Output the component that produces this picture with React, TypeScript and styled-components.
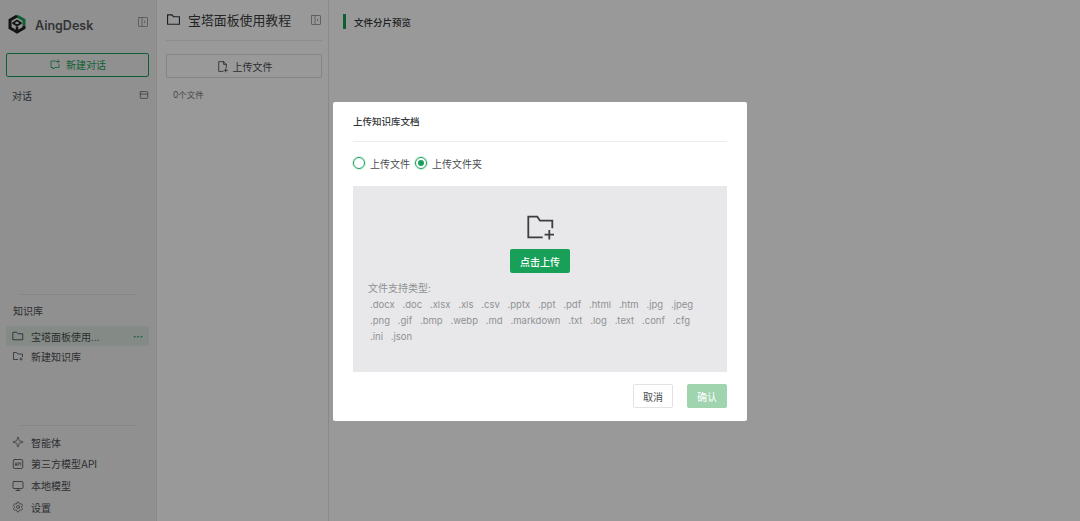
import React from "react";
import styled, { createGlobalStyle } from "styled-components";
import { Settings, Sparkle, Monitor } from "lucide-react";

const GlobalStyle = createGlobalStyle`
  html, body {
    margin: 0;
    padding: 0;
    height: 100%;
    overflow: hidden;
    font-family: "Inter", "Liberation Sans", "Noto Sans CJK SC", sans-serif;
  }
  #root { height: 100%; }
`;

const Page = styled.div`
  position: relative;
  display: flex;
  width: 1080px;
  height: 521px;
  background: #ffffff;
  color: #333639;
  overflow: hidden;
`;

const Sidebar = styled.aside`
  display: flex;
  flex-direction: column;
  flex: 0 0 157px;
  box-sizing: border-box;
  height: 100%;
  padding: 0 7px;
  background: #f0f0f0;
  border-right: 1px solid #e4e4e4;
`;

const BrandRow = styled.div`
  display: flex;
  align-items: center;
  height: 48px;
  margin-bottom: 5px;
`;

const BrandName = styled.span`
  margin: 2px 0 0 8px;
  flex: 1;
  font-size: 12.5px;
  font-weight: 600;
  color: #55585b;
`;

const CollapseBtn = styled.span<{ $lift?: number }>`
  display: inline-flex;
  margin-bottom: ${(p) => p.$lift ?? 0}px;
  color: #8a8d90;
`;

const NewChatButton = styled.div`
  display: flex;
  align-items: center;
  justify-content: center;
  gap: 5px;
  box-sizing: border-box;
  height: 24px;
  margin-left: -1px;
  padding-bottom: 1px;
  border: 1px solid #18a058;
  border-radius: 2px;
  font-size: 10px;
  color: #18a058;
`;

const SectionHead = styled.div`
  display: flex;
  align-items: center;
  justify-content: space-between;
  height: 14px;
  margin-top: 11px;
  padding: 0 0 0 5px;
  font-size: 10px;
  color: #4a4d50;
`;

const Spacer = styled.div<{ $h?: number }>`
  flex: ${(p) => (p.$h ? `0 0 ${p.$h}px` : "1")};
`;

const Divider = styled.div`
  height: 1px;
  margin: 0 12px 0 14px;
  background: #dcdcdc;
`;

const KnowledgeLabel = styled.div`
  height: 14px;
  margin: 9px 0 8px;
  padding-left: 6px;
  font-size: 10px;
  line-height: 14px;
  color: #4a4d50;
`;

const KnowledgeItem = styled.div<{ $active?: boolean }>`
  display: flex;
  align-items: center;
  gap: 7px;
  height: 20px;
  margin-left: -1px;
  padding: 0 6px;
  border-radius: 2px;
  font-size: 10px;
  color: #4a4d50;
  background: ${(p) => (p.$active ? "#dce8df" : "transparent")};
`;

const ToolList = styled.div`
  display: grid;
  grid-auto-rows: 21.67px;
  margin-top: 5px;
`;

const NavItem = styled.div`
  display: flex;
  align-items: center;
  gap: 7px;
  padding: 0 6px 0 5px;
  font-size: 10px;
  color: #4a4d50;
`;

const NavLabel = styled.span`
  flex: 1;
  white-space: nowrap;
`;

const Dots = styled.span`
  color: #18a058;
  font-size: 10px;
  font-weight: 700;
  line-height: 1;
`;

const FileColumn = styled.section`
  display: flex;
  flex-direction: column;
  flex: 0 0 172px;
  box-sizing: border-box;
  height: 100%;
  padding: 0 6px 0 9px;
  background: #ffffff;
  border-right: 1px solid #e4e4e4;
`;

const FileHead = styled.div`
  display: flex;
  align-items: center;
  height: 41px;
  padding-bottom: 1px;
  box-sizing: border-box;
  border-bottom: 1px solid #ececec;
`;

const FileTitle = styled.h1`
  flex: 1;
  margin: 0 0 0 7px;
  font-size: 12.9px;
  font-weight: 400;
  color: #3a3d40;
`;

const UploadButton = styled.div`
  display: flex;
  align-items: center;
  justify-content: center;
  gap: 4px;
  box-sizing: border-box;
  height: 24px;
  margin-top: 13px;
  border: 1px solid #dedede;
  border-radius: 2px;
  font-size: 10px;
  color: #4a4d50;
`;

const FileCount = styled.div`
  margin-top: 10px;
  padding-left: 7px;
  font-size: 8.5px;
  line-height: 14px;
  color: #76797c;
`;

const Preview = styled.main`
  flex: 1;
  padding: 14px 14px;
`;

const PreviewTitle = styled.div`
  display: flex;
  align-items: center;
  height: 15px;
  padding-left: 8px;
  border-left: 3px solid #18a058;
  font-size: 9.5px;
  font-weight: 500;
  color: #333639;
`;

const Overlay = styled.div`
  position: absolute;
  inset: 0;
  display: flex;
  align-items: center;
  justify-content: center;
  padding-top: 2px;
  background: rgba(0, 0, 0, 0.4);
`;

const Modal = styled.div`
  display: flex;
  flex-direction: column;
  box-sizing: border-box;
  width: 414px;
  height: 319px;
  padding: 0 20px;
  background: #ffffff;
  border-radius: 2px;
`;

const ModalHead = styled.div`
  display: flex;
  align-items: center;
  box-sizing: border-box;
  height: 40px;
  padding-bottom: 2px;
  border-bottom: 1px solid #ececec;
  font-size: 9.5px;
  font-weight: 500;
  color: #333639;
`;

const RadioRow = styled.div`
  display: flex;
  align-items: center;
  gap: 5px;
  height: 14px;
  margin-top: 14px;
  font-size: 10px;
  color: #4a4d50;
`;

const RadioOption = styled.label`
  display: flex;
  align-items: center;
  gap: 5px;
`;

const RadioDot = styled.span<{ $checked?: boolean }>`
  display: inline-flex;
  align-items: center;
  justify-content: center;
  box-sizing: border-box;
  width: 12px;
  height: 12px;
  border: 1px solid #18a058;
  border-radius: 50%;
  box-shadow: 0 0 0 1px rgba(24, 160, 88, 0.18);
  &::after {
    content: "";
    display: ${(p) => (p.$checked ? "block" : "none")};
    width: 6px;
    height: 6px;
    border-radius: 50%;
    background: #18a058;
  }
`;

const DropZone = styled.div`
  display: flex;
  flex-direction: column;
  box-sizing: border-box;
  height: 186px;
  margin-top: 16px;
  padding: 29px 15px 0;
  background: #e8e8ea;
`;

const DropIcon = styled.div`
  display: flex;
  justify-content: center;
  padding-left: 1px;
  color: #3c3e41;
`;

const PickButton = styled.div`
  align-self: center;
  display: flex;
  align-items: center;
  justify-content: center;
  width: 60px;
  height: 24px;
  margin-top: 8px;
  border-radius: 2px;
  background: #18a058;
  color: #ffffff;
  font-size: 10px;
  font-weight: 500;
`;

const TypesLabel = styled.div`
  margin-top: 7px;
  font-size: 10px;
  line-height: 16px;
  color: #8f9194;
`;

const TypesList = styled.div`
  margin-top: 1px;
  padding-left: 2px;
`;

const TypesRow = styled.div`
  display: flex;
  column-gap: 7.8px;
  font-size: 9.5px;
  line-height: 16px;
  color: #8f9194;
`;

const ModalFoot = styled.div`
  display: flex;
  justify-content: flex-end;
  gap: 14px;
  margin-top: 12px;
`;

const FootButton = styled.div<{ $primary?: boolean }>`
  display: flex;
  align-items: center;
  justify-content: center;
  box-sizing: border-box;
  width: 40px;
  height: 24px;
  border-radius: 2px;
  border: 1px solid ${(p) => (p.$primary ? "#9fd4af" : "#e2e2e2")};
  background: ${(p) => (p.$primary ? "#9fd4af" : "#ffffff")};
  color: ${(p) => (p.$primary ? "#ffffff" : "#4a4d50")};
  font-size: 10px;
`;

const Icon: React.FC<{ size?: number; sw?: number; children: React.ReactNode }> = ({ size = 12, sw = 1.6, children }) => (
  <svg width={size} height={size} viewBox="0 0 24 24" fill="none" stroke="currentColor" strokeWidth={sw} strokeLinecap="round" strokeLinejoin="round" style={{ flexShrink: 0 }}>
    {children}
  </svg>
);

const Collapse = ({ lift }: { lift?: number }) => (
  <CollapseBtn $lift={lift}>
    <Icon size={12}>
      <rect x="3" y="3" width="18" height="18" rx="1" />
      <path d="M10 3v18" />
      <path d="M16 10l-2 2 2 2" />
    </Icon>
  </CollapseBtn>
);

const Folder = ({ size = 12 }: { size?: number }) => (
  <Icon size={size} sw={1.8}>
    <path d="M2.500 4.500h7l2.500 3h9.500v12h-19z" strokeLinejoin="miter" />
  </Icon>
);

const FolderPlus = () => (
  <Icon size={12}>
    <path d="M12 19H3V5h6l2.500 3H21v6" strokeLinecap="butt" />
    <path d="M18 15v6M15 18h6" strokeLinecap="butt" />
  </Icon>
);

const BigFolderPlus = () => (
  <svg width="28" height="26" viewBox="0 0 28 26" fill="none" stroke="currentColor" strokeWidth="1.8">
    <path d="M15.700 22.300H1.300V1.700h9l2.700 4h12.300v7.600" />
    <path d="M22.300 15v9.400M17.600 19.700H27" />
  </svg>
);

const Logo = () => (
  <svg width="20" height="20" viewBox="0 0 20 20" fill="none" style={{ flexShrink: 0 }}>
    <path d="M10 2l7 4v5" stroke="#18a058" strokeWidth="3" strokeLinejoin="miter" />
    <path d="M10 2L3 6v8l4 2.300" stroke="#1d1f22" strokeWidth="3" />
    <path d="M17 11.500V14l-7 4-3-1.700" stroke="#1d1f22" strokeWidth="3" />
    <path d="M10 5.500l4.800 3v1.300L10 12.500 5.200 9.800V8.500z" fill="#1d1f22" />
    <path d="M10 7.500l2.400 1.400L10 10.200 7.600 8.900z" fill="#f0f0f0" />
    <path d="M10 12.500v4" stroke="#1d1f22" strokeWidth="2.500" />
  </svg>
);

const typeRows = [
  [".docx", ".doc", ".xlsx", ".xls", ".csv", ".pptx", ".ppt", ".pdf", ".html", ".htm", ".jpg", ".jpeg"],
  [".png", ".gif", ".bmp", ".webp", ".md", ".markdown", ".txt", ".log", ".text", ".conf", ".cfg"],
  [".ini", ".json"],
];

export default function App() {
  return (
    <Page>
      <GlobalStyle />
      <Sidebar>
        <BrandRow>
          <Logo />
          <BrandName>AingDesk</BrandName>
          <Collapse lift={4} />
        </BrandRow>
        <NewChatButton>
          <Icon size={12}>
            <path d="M13 4H4v13h4v3l4-3h8v-6" strokeLinejoin="miter" />
            <path d="M18 2v6M15 5h6" />
          </Icon>
          新建对话
        </NewChatButton>
        <SectionHead>
          对话
          <Icon size={10}>
            <rect x="3" y="4" width="18" height="16" rx="2" />
            <path d="M3 10h18" />
          </Icon>
        </SectionHead>
        <Spacer />
        <Divider />
        <KnowledgeLabel>知识库</KnowledgeLabel>
        <KnowledgeItem $active>
          <Folder />
          <NavLabel>宝塔面板使用...</NavLabel>
          <Dots>···</Dots>
        </KnowledgeItem>
        <KnowledgeItem>
          <FolderPlus />
          <NavLabel>新建知识库</NavLabel>
        </KnowledgeItem>
        <Spacer $h={59} />
        <Divider />
        <ToolList>
          <NavItem>
            <Sparkle size={12} strokeWidth={1.4} />
            <NavLabel>智能体</NavLabel>
          </NavItem>
          <NavItem>
            <Icon>
              <rect x="2.500" y="3" width="19" height="18" rx="3" />
              <path d="M6.500 15l1.500-6 1.500 6M7 13.200h2M12 15V9h1.500a1.600 1.600 0 0 1 0 3.400H12M17.500 9v6" strokeWidth="1.200" />
            </Icon>
            <NavLabel>第三方模型API</NavLabel>
          </NavItem>
          <NavItem>
            <Monitor size={12} strokeWidth={1.6} />
            <NavLabel>本地模型</NavLabel>
          </NavItem>
          <NavItem>
            <Settings size={12} strokeWidth={1.4} />
            <NavLabel>设置</NavLabel>
          </NavItem>
        </ToolList>
        <Spacer $h={3} />
      </Sidebar>

      <FileColumn>
        <FileHead>
          <Folder size={15} />
          <FileTitle>宝塔面板使用教程</FileTitle>
          <Collapse />
        </FileHead>
        <UploadButton>
          <Icon size={13}>
            <path d="M13 21H5V3h9l5 5v6" />
            <path d="M14 3v5h5" />
            <path d="M18 16v6M15 19h6" />
          </Icon>
          上传文件
        </UploadButton>
        <FileCount>0个文件</FileCount>
      </FileColumn>

      <Preview>
        <PreviewTitle>文件分片预览</PreviewTitle>
      </Preview>

      <Overlay>
        <Modal>
          <ModalHead>上传知识库文档</ModalHead>
          <RadioRow>
            <RadioOption>
              <RadioDot />
              上传文件
            </RadioOption>
            <RadioOption>
              <RadioDot $checked />
              上传文件夹
            </RadioOption>
          </RadioRow>
          <DropZone>
            <DropIcon>
              <BigFolderPlus />
            </DropIcon>
            <PickButton>点击上传</PickButton>
            <TypesLabel>文件支持类型:</TypesLabel>
            <TypesList>
              {typeRows.map((row) => (
                <TypesRow key={row[0]}>
                  {row.map((t) => (
                    <span key={t}>{t}</span>
                  ))}
                </TypesRow>
              ))}
            </TypesList>
          </DropZone>
          <ModalFoot>
            <FootButton>取消</FootButton>
            <FootButton $primary>确认</FootButton>
          </ModalFoot>
        </Modal>
      </Overlay>
    </Page>
  );
}
